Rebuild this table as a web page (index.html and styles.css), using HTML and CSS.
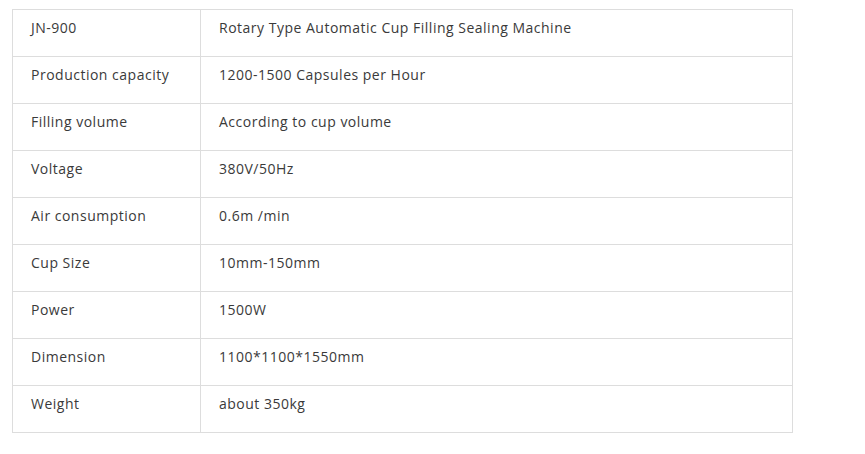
FILE: index.html
```html
<!DOCTYPE html>
<html>
<head>
<meta charset="utf-8">
<link rel="stylesheet" href="styles.css">
</head>
<body>
<div class="wrap">
<table class="spec">
<tbody>
<tr><td class="k">JN-900</td><td class="v">Rotary Type Automatic Cup Filling Sealing Machine</td></tr>
<tr><td class="k">Production capacity</td><td class="v">1200-1500 Capsules per Hour</td></tr>
<tr><td class="k">Filling volume</td><td class="v">According to cup volume</td></tr>
<tr><td class="k">Voltage</td><td class="v">380V/50Hz</td></tr>
<tr><td class="k">Air consumption</td><td class="v">0.6m /min</td></tr>
<tr><td class="k">Cup Size</td><td class="v">10mm-150mm</td></tr>
<tr><td class="k">Power</td><td class="v">1500W</td></tr>
<tr><td class="k">Dimension</td><td class="v">1100*1100*1550mm</td></tr>
<tr><td class="k">Weight</td><td class="v">about 350kg</td></tr>
</tbody>
</table>
</div>
</body>
</html>
```

FILE: styles.css
```css
html, body {
  margin: 0;
  padding: 0;
  background: #fff;
}
.wrap {
  padding: 9px 0 0 12px;
}
.spec {
  border-collapse: collapse;
  width: 781px;
  font-family: "Open Sans", "Liberation Sans", sans-serif;
  font-size: 14px;
  letter-spacing: 0.5px;
  color: #3a3a3a;
}
.spec td {
  border: 1px solid #ddd;
  height: 47px;
  box-sizing: border-box;
  vertical-align: top;
  padding: 7px 18px 0 18px;
  line-height: 22px;
}
.spec td.k {
  width: 188px;
}
```
